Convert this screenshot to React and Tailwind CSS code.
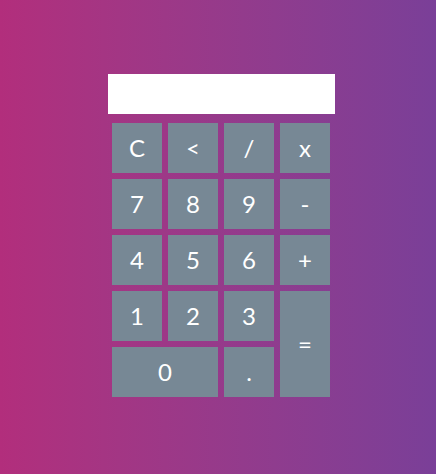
import React from 'react';

const keys = [
  { label: 'C' },
  { label: '<' },
  { label: '/' },
  { label: 'x' },
  { label: '7' },
  { label: '8' },
  { label: '9' },
  { label: '-' },
  { label: '4' },
  { label: '5' },
  { label: '6' },
  { label: '+' },
  { label: '1' },
  { label: '2' },
  { label: '3' },
  { label: '=', className: 'row-span-2' },
  { label: '0', className: 'col-span-2' },
  { label: '.' },
];

const App = () => {
  return (
    <div
      className="h-screen w-full bg-gradient-to-r from-[#b22e7c] to-[#7a3f98] pl-[108px] pt-[74px]"
      style={{ fontFamily: 'Lato, "Open Sans", sans-serif' }}
    >
      {/* Display */}
      <div className="h-10 w-[227px] bg-white" />

      {/* Keypad */}
      <div className="mt-[9px] ml-1 grid w-[218px] grid-cols-[repeat(4,50px)] auto-rows-[50px] gap-[6px]">
        {keys.map((k) => (
          <button
            key={k.label}
            className={`flex items-center justify-center bg-[#778895] text-[24px] text-white ${k.className || ''}`}
          >
            {k.label}
          </button>
        ))}
      </div>
    </div>
  );
};

export default App;
